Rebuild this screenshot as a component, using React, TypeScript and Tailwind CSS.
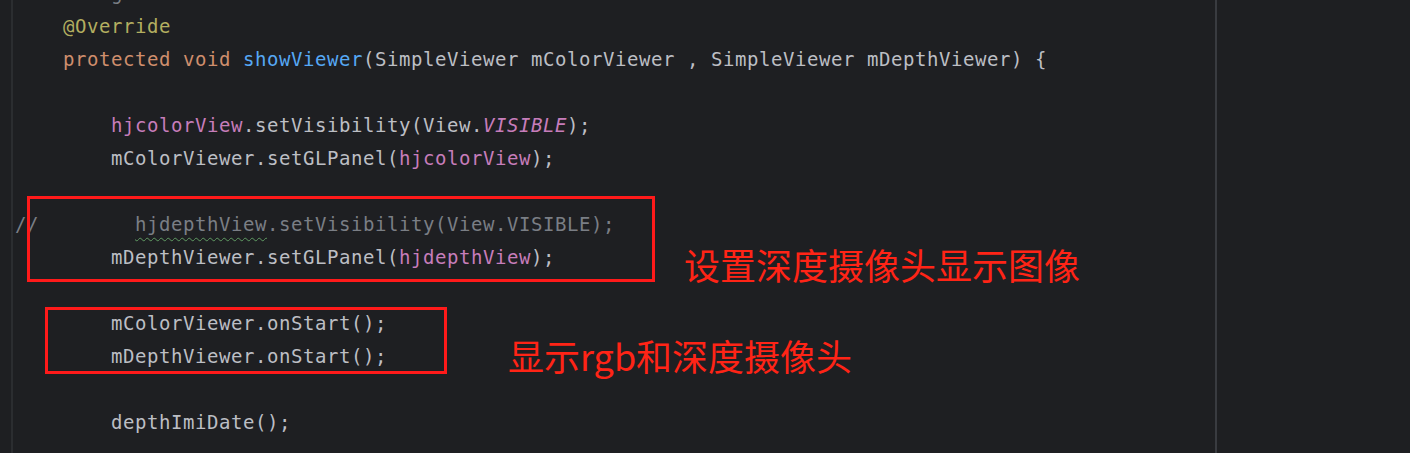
const C = {
  text: "text-[#bcbec4]",
  kw: "text-[#cf8e6d]",
  fn: "text-[#56a8f5]",
  ann: "text-[#b3ae60]",
  field: "text-[#c77dbb]",
  comment: "text-[#7a7e85]",
}

function Line({ children }: { children?: React.ReactNode }) {
  return <div className="h-[33px] whitespace-pre leading-[33px]">{children ?? " "}</div>
}

export default function App() {
  return (
    <div className="relative flex h-[453px] w-[1410px] overflow-hidden bg-[#1e1f22]">
      <div className="w-[11px] shrink-0" />
      <div className="w-[2px] shrink-0 bg-[#2b2d30]" />

      <div
        className={`-mt-[23px] w-[1202px] shrink-0 pl-[2px] text-[19px] tracking-[0.56px] ${C.text}`}
        style={{ fontFamily: '"DejaVu Sans Mono", "Liberation Mono", monospace' }}
      >
        <Line>
          {"        "}
          <span className={C.comment}>g</span>
        </Line>
        <Line>
          {"    "}
          <span className={C.ann}>@Override</span>
        </Line>
        <Line>
          {"    "}
          <span className={C.kw}>protected void </span>
          <span className={C.fn}>showViewer</span>
          (SimpleViewer mColorViewer , SimpleViewer mDepthViewer) {"{"}
        </Line>
        <Line />
        <Line>
          {"        "}
          <span className={C.field}>hjcolorView</span>
          .setVisibility(View.
          <span className={`${C.field} italic`}>VISIBLE</span>
          );
        </Line>
        <Line>
          {"        "}mColorViewer.setGLPanel(
          <span className={C.field}>hjcolorView</span>
          );
        </Line>
        <Line />
        <Line>
          <span className={C.comment}>
            {"//        "}
            <span className="underline decoration-[#5f9a62] decoration-wavy decoration-1 underline-offset-[6px]">
              hjdepthView
            </span>
            .setVisibility(View.VISIBLE);
          </span>
        </Line>
        <Line>
          {"        "}mDepthViewer.setGLPanel(
          <span className={C.field}>hjdepthView</span>
          );
        </Line>
        <Line />
        <Line>{"        "}mColorViewer.onStart();</Line>
        <Line>{"        "}mDepthViewer.onStart();</Line>
        <Line />
        <Line>{"        "}depthImiDate();</Line>
        <Line />
      </div>

      <div className="w-[2px] shrink-0 bg-[#393b40]" />
      <div className="flex-1" />

      {/* red annotations drawn over the screenshot */}
      <div className="pointer-events-none absolute inset-0">
        <div className="absolute left-[27px] top-[196px] h-[86px] w-[628px] border-[3px] border-[#ff1a1a]" />
        <div className="absolute left-[45px] top-[307px] h-[67px] w-[402px] border-[3px] border-[#ff1a1a]" />
        <div
          className="absolute left-[684px] top-[246px] text-[36px] leading-[36px] text-[#ff2416]"
          style={{ fontFamily: '"Noto Sans CJK SC", "Noto Sans", sans-serif' }}
        >
          设置深度摄像头显示图像
        </div>
        <div
          className="absolute left-[508px] top-[337px] text-[36px] leading-[36px] text-[#ff2416]"
          style={{ fontFamily: '"Noto Sans CJK SC", "Noto Sans", sans-serif' }}
        >
          显示rgb和深度摄像头
        </div>
      </div>
    </div>
  )
}
